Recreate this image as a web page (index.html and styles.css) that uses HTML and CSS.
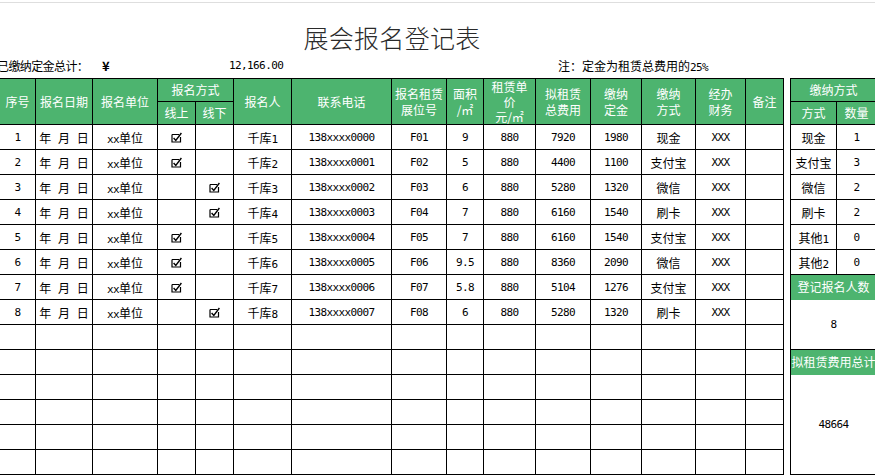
FILE: index.html
```html
<!DOCTYPE html>
<html lang="zh-CN">
<head>
<meta charset="utf-8">
<title>展会报名登记表</title>
<link rel="stylesheet" href="styles.css">
</head>
<body>
<div class="sheet">
  <div class="gridtop"></div>
  <h1 class="title">展会报名登记表</h1>
  <div class="info">
    <span class="label">已缴纳定金总计：</span>
    <span class="yen">¥</span>
    <span class="amount n">12,166.00</span>
    <span class="note">注：定金为租赁总费用的<span class="n">25%</span></span>
  </div>
  <div class="tables">
    <table class="main">
      <colgroup>
        <col class="c36"><col class="c57"><col class="c65"><col class="c38"><col class="c38">
        <col class="c58"><col class="c100"><col class="c55"><col class="c37"><col class="c52">
        <col class="c55"><col class="c51"><col class="c54"><col class="c50"><col class="c38">
      </colgroup>
      <thead>
        <tr class="hr">
          <th rowspan="2">序号</th>
          <th rowspan="2">报名日期</th>
          <th rowspan="2">报名单位</th>
          <th colspan="2">报名方式</th>
          <th rowspan="2">报名人</th>
          <th rowspan="2">联系电话</th>
          <th rowspan="2">报名租赁<br>展位号</th>
          <th rowspan="2">面积<br>/㎡</th>
          <th rowspan="2" class="three">租赁单<br>价<br>元/㎡</th>
          <th rowspan="2">拟租赁<br>总费用</th>
          <th rowspan="2">缴纳<br>定金</th>
          <th rowspan="2">缴纳<br>方式</th>
          <th rowspan="2">经办<br>财务</th>
          <th rowspan="2">备注</th>
        </tr>
        <tr class="hr"><th>线上</th><th>线下</th></tr>
      </thead>
      <tbody>
        <tr><td class="n">1</td><td class="date">年 月 日</td><td><span class="n">xx</span>单位</td><td><svg class="cb" viewBox="0 0 11 11"><path d="M1 2.5h7M1 2.5v7.5h8.5v-5" fill="none" stroke="#000" stroke-width="1.2"/><path d="M2.6 6l2.2 2.4L10.4 1" fill="none" stroke="#000" stroke-width="1.4"/></svg></td><td></td><td>千库<span class="n">1</span></td><td class="n">138xxxx0000</td><td class="n">F01</td><td class="n">9</td><td class="n">880</td><td class="n">7920</td><td class="n">1980</td><td>现金</td><td class="n">XXX</td><td></td></tr>
        <tr><td class="n">2</td><td class="date">年 月 日</td><td><span class="n">xx</span>单位</td><td><svg class="cb" viewBox="0 0 11 11"><path d="M1 2.5h7M1 2.5v7.5h8.5v-5" fill="none" stroke="#000" stroke-width="1.2"/><path d="M2.6 6l2.2 2.4L10.4 1" fill="none" stroke="#000" stroke-width="1.4"/></svg></td><td></td><td>千库<span class="n">2</span></td><td class="n">138xxxx0001</td><td class="n">F02</td><td class="n">5</td><td class="n">880</td><td class="n">4400</td><td class="n">1100</td><td>支付宝</td><td class="n">XXX</td><td></td></tr>
        <tr><td class="n">3</td><td class="date">年 月 日</td><td><span class="n">xx</span>单位</td><td></td><td><svg class="cb" viewBox="0 0 11 11"><path d="M1 2.5h7M1 2.5v7.5h8.5v-5" fill="none" stroke="#000" stroke-width="1.2"/><path d="M2.6 6l2.2 2.4L10.4 1" fill="none" stroke="#000" stroke-width="1.4"/></svg></td><td>千库<span class="n">3</span></td><td class="n">138xxxx0002</td><td class="n">F03</td><td class="n">6</td><td class="n">880</td><td class="n">5280</td><td class="n">1320</td><td>微信</td><td class="n">XXX</td><td></td></tr>
        <tr><td class="n">4</td><td class="date">年 月 日</td><td><span class="n">xx</span>单位</td><td></td><td><svg class="cb" viewBox="0 0 11 11"><path d="M1 2.5h7M1 2.5v7.5h8.5v-5" fill="none" stroke="#000" stroke-width="1.2"/><path d="M2.6 6l2.2 2.4L10.4 1" fill="none" stroke="#000" stroke-width="1.4"/></svg></td><td>千库<span class="n">4</span></td><td class="n">138xxxx0003</td><td class="n">F04</td><td class="n">7</td><td class="n">880</td><td class="n">6160</td><td class="n">1540</td><td>刷卡</td><td class="n">XXX</td><td></td></tr>
        <tr><td class="n">5</td><td class="date">年 月 日</td><td><span class="n">xx</span>单位</td><td><svg class="cb" viewBox="0 0 11 11"><path d="M1 2.5h7M1 2.5v7.5h8.5v-5" fill="none" stroke="#000" stroke-width="1.2"/><path d="M2.6 6l2.2 2.4L10.4 1" fill="none" stroke="#000" stroke-width="1.4"/></svg></td><td></td><td>千库<span class="n">5</span></td><td class="n">138xxxx0004</td><td class="n">F05</td><td class="n">7</td><td class="n">880</td><td class="n">6160</td><td class="n">1540</td><td>支付宝</td><td class="n">XXX</td><td></td></tr>
        <tr><td class="n">6</td><td class="date">年 月 日</td><td><span class="n">xx</span>单位</td><td><svg class="cb" viewBox="0 0 11 11"><path d="M1 2.5h7M1 2.5v7.5h8.5v-5" fill="none" stroke="#000" stroke-width="1.2"/><path d="M2.6 6l2.2 2.4L10.4 1" fill="none" stroke="#000" stroke-width="1.4"/></svg></td><td></td><td>千库<span class="n">6</span></td><td class="n">138xxxx0005</td><td class="n">F06</td><td class="n">9.5</td><td class="n">880</td><td class="n">8360</td><td class="n">2090</td><td>微信</td><td class="n">XXX</td><td></td></tr>
        <tr><td class="n">7</td><td class="date">年 月 日</td><td><span class="n">xx</span>单位</td><td><svg class="cb" viewBox="0 0 11 11"><path d="M1 2.5h7M1 2.5v7.5h8.5v-5" fill="none" stroke="#000" stroke-width="1.2"/><path d="M2.6 6l2.2 2.4L10.4 1" fill="none" stroke="#000" stroke-width="1.4"/></svg></td><td></td><td>千库<span class="n">7</span></td><td class="n">138xxxx0006</td><td class="n">F07</td><td class="n">5.8</td><td class="n">880</td><td class="n">5104</td><td class="n">1276</td><td>支付宝</td><td class="n">XXX</td><td></td></tr>
        <tr><td class="n">8</td><td class="date">年 月 日</td><td><span class="n">xx</span>单位</td><td></td><td><svg class="cb" viewBox="0 0 11 11"><path d="M1 2.5h7M1 2.5v7.5h8.5v-5" fill="none" stroke="#000" stroke-width="1.2"/><path d="M2.6 6l2.2 2.4L10.4 1" fill="none" stroke="#000" stroke-width="1.4"/></svg></td><td>千库<span class="n">8</span></td><td class="n">138xxxx0007</td><td class="n">F08</td><td class="n">6</td><td class="n">880</td><td class="n">5280</td><td class="n">1320</td><td>刷卡</td><td class="n">XXX</td><td></td></tr>
        <tr><td></td><td></td><td></td><td></td><td></td><td></td><td></td><td></td><td></td><td></td><td></td><td></td><td></td><td></td><td></td></tr>
        <tr><td></td><td></td><td></td><td></td><td></td><td></td><td></td><td></td><td></td><td></td><td></td><td></td><td></td><td></td><td></td></tr>
        <tr><td></td><td></td><td></td><td></td><td></td><td></td><td></td><td></td><td></td><td></td><td></td><td></td><td></td><td></td><td></td></tr>
        <tr><td></td><td></td><td></td><td></td><td></td><td></td><td></td><td></td><td></td><td></td><td></td><td></td><td></td><td></td><td></td></tr>
        <tr><td></td><td></td><td></td><td></td><td></td><td></td><td></td><td></td><td></td><td></td><td></td><td></td><td></td><td></td><td></td></tr>
        <tr><td></td><td></td><td></td><td></td><td></td><td></td><td></td><td></td><td></td><td></td><td></td><td></td><td></td><td></td><td></td></tr>
      </tbody>
    </table>
    <table class="side">
      <colgroup><col class="c46"><col class="c40"></colgroup>
      <thead>
        <tr class="hr"><th colspan="2">缴纳方式</th></tr>
        <tr class="hr"><th>方式</th><th>数量</th></tr>
      </thead>
      <tbody>
        <tr><td>现金</td><td class="n">1</td></tr>
        <tr><td>支付宝</td><td class="n">3</td></tr>
        <tr><td>微信</td><td class="n">2</td></tr>
        <tr><td>刷卡</td><td class="n">2</td></tr>
        <tr><td>其他<span class="n">1</span></td><td class="n">0</td></tr>
        <tr><td>其他<span class="n">2</span></td><td class="n">0</td></tr>
        <tr class="sum-head"><th colspan="2">登记报名人数</th></tr>
        <tr class="sum-val short"><td colspan="2" class="n">8</td></tr>
        <tr class="sum-head"><th colspan="2">拟租赁费用总计</th></tr>
        <tr class="sum-val tall"><td colspan="2" class="n">48664</td></tr>
      </tbody>
    </table>
  </div>
</div>
</body>
</html>
```

FILE: styles.css
```css
* { box-sizing: border-box; }
html, body { margin: 0; padding: 0; background: #fff; }
body {
  width: 875px;
  height: 475px;
  overflow: hidden;
  font-family: "Noto Sans CJK SC", "Noto Sans", sans-serif;
  color: #000;
}
.sheet { width: 900px; }
.gridtop { height: 3px; border-bottom: 1px solid #dedede; }
.title {
  margin: 0;
  width: 784px;
  height: 49px;
  padding-top: 19px;
  font-size: 25px;
  line-height: 30px;
  font-weight: 300;
  text-align: center;
  color: #2a2a2a;
  letter-spacing: 0.3px;
}
.info {
  display: flex;
  height: 26px;
  padding-top: 2px;
  line-height: 24px;
  font-size: 12px;
  white-space: nowrap;
}
.label { margin-left: -3px; width: 105px; letter-spacing: -0.6px; }
.yen { width: 127px; font-size: 13px; font-weight: 700; }
.amount { width: 329px; }
.n {
  font-family: "DejaVu Sans Mono", "Liberation Mono", monospace;
  font-size: 11px;
  letter-spacing: -0.6px;
}
.tables { display: flex; align-items: flex-start; gap: 6px; margin-left: -1px; }
table { border-collapse: collapse; table-layout: fixed; }
.main { width: 785px; }
.side { width: 86px; }
.c36 { width: 36px; } .c57 { width: 57px; } .c65 { width: 65px; } .c38 { width: 38px; }
.c58 { width: 58px; } .c100 { width: 100px; } .c55 { width: 55px; } .c37 { width: 37px; }
.c52 { width: 52px; } .c51 { width: 51px; } .c54 { width: 54px; } .c50 { width: 50px; }
.c46 { width: 46px; } .c40 { width: 40px; }
th, td {
  border: 1px solid #000;
  padding: 0;
  text-align: center;
  vertical-align: middle;
  font-size: 12px;
  font-weight: 400;
  white-space: nowrap;
  overflow: hidden;
}
th { background: #4db46f; color: #fff; line-height: 16px; }
th.three { line-height: 15px; }
.hr { height: 23px; }
tbody tr { height: 25px; }
td.date { word-spacing: 4px; }
.cb { width: 11px; height: 11px; display: block; margin: 0 auto; }
.sum-head th { border-top: 1px solid #000; border-bottom: none; overflow: visible; }
.sum-val td { border-top: none; border-bottom: none; }
.sum-val.short { height: 50px; }
.sum-val.tall { height: 100px; }
.side tbody tr:last-child td { border-bottom: 1px solid #000; }
```
